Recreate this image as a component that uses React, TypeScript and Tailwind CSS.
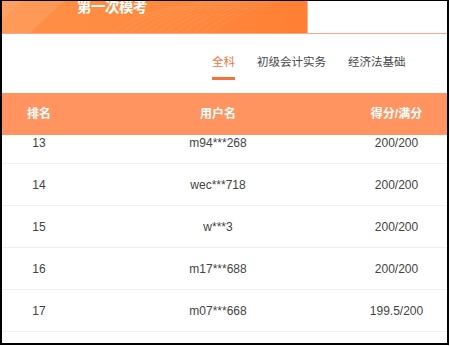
import React from "react";

const rows = [
  { rank: 13, name: "m94***268", score: "200/200" },
  { rank: 14, name: "wec***718", score: "200/200" },
  { rank: 15, name: "w***3", score: "200/200" },
  { rank: 16, name: "m17***688", score: "200/200" },
  { rank: 17, name: "m07***668", score: "199.5/200" },
];

const tabs = ["全科", "初级会计实务", "经济法基础"];

function Banner() {
  return (
    <div className="flex h-[32px]">
      <div className="relative w-[305px] overflow-hidden bg-gradient-to-r from-[#ff8f47] via-[#ff8a3f] to-[#ff7f33]">
        <svg
          className="absolute inset-0"
          width="305"
          height="32"
          viewBox="0 0 305 32"
        >
          <polygon points="0,0 62,0 28,32 0,32" fill="#ffffff" opacity="0.1" />
          <polygon points="0,0 20,0 0,20" fill="#ffffff" opacity="0.06" />
          {[0, 1, 2, 3, 4, 5, 6, 7, 8, 9, 10, 11].map((i) => (
            <path
              key={i}
              d={`M${110 + i * 9} 32 C ${130 + i * 9} 14, ${170 + i * 8} 4, ${230 + i * 6} -4`}
              stroke="#ffffff"
              strokeOpacity="0.09"
              fill="none"
            />
          ))}
        </svg>
        <div className="relative -mt-[4px] pl-[75px] text-[14.5px] font-bold leading-[20px] tracking-[-0.5px] text-white">
          第一次模考
        </div>
      </div>
      <div className="w-px bg-[#ffb08a]" />
      <div className="flex-1 bg-white" />
    </div>
  );
}

export default function App() {
  return (
    <div
      className="h-[346px] w-[450px] overflow-hidden bg-white"
      style={{ fontFamily: '"Liberation Sans", "Noto Sans CJK SC", sans-serif' }}
    >
      <div className="flex h-[345px] w-[449px] flex-col overflow-hidden border-t border-r-2 border-b-2 border-l-2 border-black">
        <Banner />
        <div className="h-px bg-[#ffa487]" />
        <div className="flex h-[59px] gap-[22px] pt-[18px] pl-[210px] text-[11.5px] leading-[20px]">
          {tabs.map((tab, i) => (
            <div key={tab} className="flex flex-col items-center">
              <span className={i === 0 ? "text-[#f5733b]" : "text-[#4a4a4a]"}>
                {tab}
              </span>
              {i === 0 && (
                <div className="mt-[5px] h-[3px] w-full bg-[#f5733b]" />
              )}
            </div>
          ))}
        </div>
        <div className="relative z-10 grid h-[42px] grid-cols-[74px_284px_73px] items-center bg-[#ff9461] text-[12px] font-bold text-white">
          <div className="text-center">排名</div>
          <div className="text-center">用户名</div>
          <div className="text-center">得分/满分</div>
        </div>
        <div className="-mt-[13px] flex-1 overflow-hidden">
          {rows.map((row) => (
            <div
              key={row.rank}
              className="grid h-[42px] grid-cols-[74px_284px_73px] items-center border-b border-[#efefef] text-[12px] text-[#444]"
            >
              <div className="text-center">{row.rank}</div>
              <div className="text-center">{row.name}</div>
              <div className="text-center">{row.score}</div>
            </div>
          ))}
        </div>
      </div>
    </div>
  );
}
